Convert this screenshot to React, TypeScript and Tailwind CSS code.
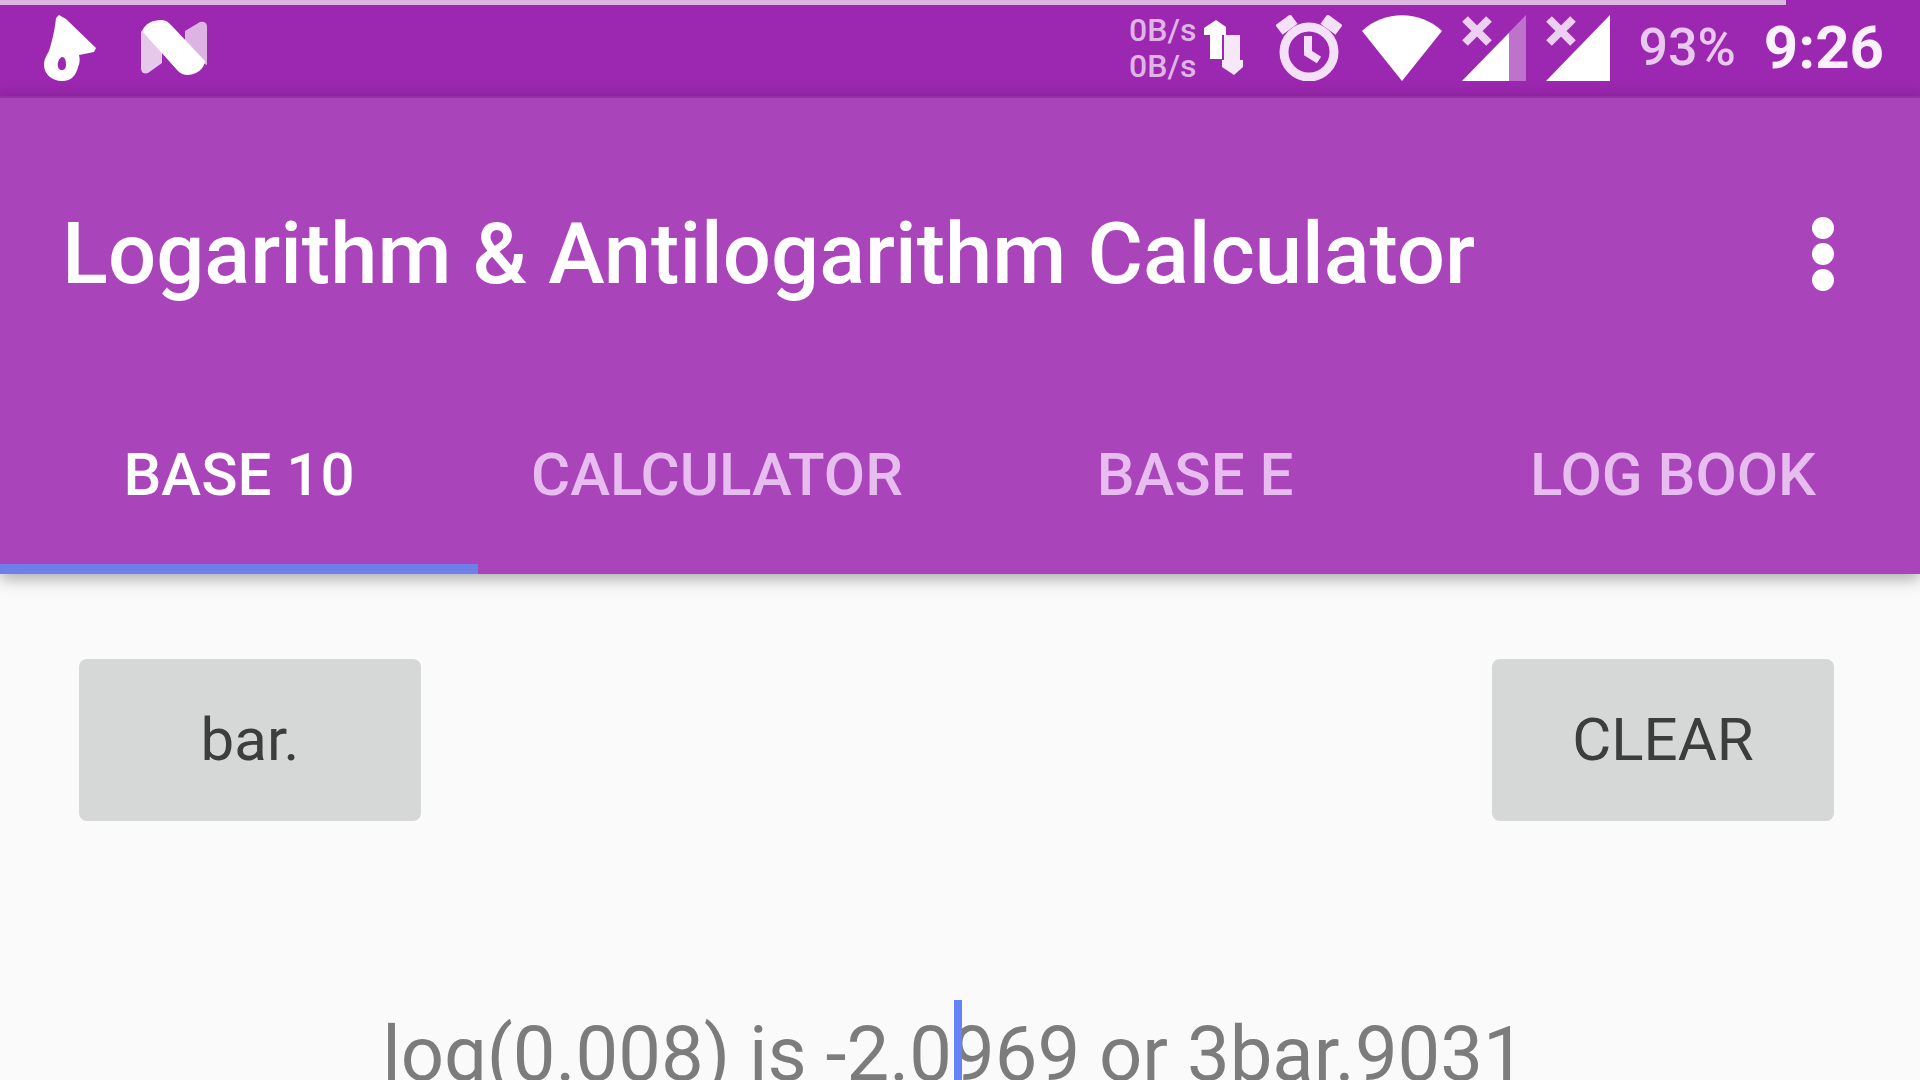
import { useState } from "react";

const TABS = ["BASE 10", "CALCULATOR", "BASE E", "LOG BOOK"] as const;

function PointerIcon() {
  return (
    <svg viewBox="0 0 54 66" className="w-[54px] h-[66px]" fill="#fff">
      <path d="M15 0 L22 4 L52 33 L50 37 L35 40 C36 44 36 48 34 52 C32 60 28 66 18 66 C8 66 0 59 0 50 C0 44 3 40 5 36 C8 27 11 14 12 3 Z M18 42 C15 43 13 48 14 52 C16 57 22 56 22 50 C22 45 21 42 18 42 Z" fillRule="evenodd" />
    </svg>
  );
}

function NougatIcon() {
  return (
    <svg viewBox="0 0 72 58" className="w-[72px] h-[58px]" fill="#fff">
      <path d="M3 12 V49 Q3 56 10 54 L24 44 V20 Z" opacity="0.75" />
      <path d="M69 46 V7 Q68 2 62 3 L47 12 V36 Z" opacity="0.65" />
      <path d="M4 12 Q9 1 24 1 Q29 1 34 7 L67 42 Q66 50 58 54 Q47 59 40 52 Z" />
    </svg>
  );
}

function TransferIcon() {
  return (
    <svg viewBox="0 0 40 56" className="w-10 h-14" fill="#fff">
      <path d="M12 0 L22 7 V15 H18 V39 H6 V15 H0 V8 Z" />
      <path d="M20 15 H36 V40 H39 V47 L30 55 L18 47 V40 H20 Z" opacity="0.9" />
    </svg>
  );
}

function AlarmIcon() {
  return (
    <svg viewBox="0 0 66 66" className="w-[66px] h-[66px]" fill="none" stroke="#f4e0f8">
      <circle cx="33" cy="37" r="25" strokeWidth="9" />
      <path d="M3 15 L18 4 M63 15 L48 4" strokeWidth="12" />
      <path d="M32 21 V38 L43 45" strokeWidth="8" />
    </svg>
  );
}

function WifiIcon() {
  return (
    <svg viewBox="0 0 80 66" className="w-20 h-[66px]" fill="#fff">
      <path d="M0 16 C22 -5 58 -5 80 16 L40 66 Z" />
    </svg>
  );
}

function SignalIcon({ weak = false }: { weak?: boolean }) {
  return (
    <svg viewBox="0 0 64 66" className="w-16 h-[66px]" fill="#fff">
      {weak ? (
        <>
          <path d="M0 66 L64 0 V66 Z" opacity="0.35" />
          <path d="M0 66 L47 18 V66 Z" />
        </>
      ) : (
        <path d="M0 66 L64 0 V66 Z" />
      )}
      <path d="M3 4 L27 28 M27 4 L3 28" stroke="#ecd0f1" strokeWidth="8" />
    </svg>
  );
}

function StatusBar() {
  return (
    <div className="h-24 bg-[#9c27b0] text-white">
      <div className="h-[5px] w-[93%] bg-[#dab6e0]" />
      <div className="flex h-[86px] items-center justify-between pl-11 pr-9">
        <div className="flex items-center gap-10">
          <PointerIcon />
          <NougatIcon />
        </div>
        <div className="flex items-center gap-7">
          <div className="flex items-center gap-5">
            <div className="flex items-center gap-2 mr-3">
              <div className="text-[32px] leading-9 font-medium text-[#dfb5e6]">
                <div>0B/s</div>
                <div>0B/s</div>
              </div>
              <TransferIcon />
            </div>
            <AlarmIcon />
            <WifiIcon />
            <SignalIcon weak />
            <SignalIcon />
          </div>
          <span className="text-[52px] leading-none font-medium text-[#e8c8ee]">93%</span>
          <span className="text-[60px] leading-none font-bold text-[#fbf0fd]">9:26</span>
        </div>
      </div>
    </div>
  );
}

export default function App() {
  const [tab, setTab] = useState(0);
  const [value, setValue] = useState("");

  return (
    <div className="h-screen overflow-hidden bg-[#fafafa] font-['Roboto',sans-serif]">
      <StatusBar />

      <header className="bg-[#aa44bb] border-t-2 border-[#9632a8] shadow-[0_4px_16px_rgba(0,0,0,0.35)]">
        <div className="flex h-[312px] items-center justify-between pl-[62px] pr-[86px]">
          <h1 className="text-[85px] leading-none font-medium text-white whitespace-nowrap">Logarithm &amp; Antilogarithm Calculator</h1>
          <button aria-label="More options" className="flex flex-col gap-1">
            <span className="size-[22px] rounded-full bg-white" />
            <span className="size-[22px] rounded-full bg-white" />
            <span className="size-[22px] rounded-full bg-white" />
          </button>
        </div>
        <nav role="tablist" className="grid grid-cols-4 pr-2">
          {TABS.map((name, i) => (
            <button
              key={name}
              role="tab"
              aria-selected={tab === i}
              onClick={() => setTab(i)}
              className={`h-[164px] pb-6 border-b-10 text-[60px] leading-none font-medium whitespace-nowrap ${
                tab === i ? "border-[#6f7ee8] text-white" : "border-transparent text-[#e6bdee]"
              }`}
            >
              {name}
            </button>
          ))}
        </nav>
      </header>

      <main>
        <div className="flex justify-between pt-[85px] pl-[79px] pr-[86px]">
          <button onClick={() => setValue(value + "bar.")} className="h-[162px] w-[342px] rounded-lg bg-[#d6d8d7] text-[60px] leading-none text-[#3c3d3c]">bar.</button>
          <button onClick={() => setValue("")} className="h-[162px] w-[342px] rounded-lg bg-[#d6d8d7] text-[60px] leading-none text-[#3c3d3c]">CLEAR</button>
        </div>
        <div className="relative mt-[179px] mr-3">
          <input
            aria-label="Number"
            value={value}
            onChange={(e) => setValue(e.target.value)}
            placeholder="log(0.008) is -2.0969 or 3bar.9031"
            className="block h-[108px] w-full bg-transparent text-center text-[76px] text-[#7c7c7c] placeholder:text-[#7c7c7c] outline-none"
          />
          {value === "" && <span className="absolute left-1/2 top-0 h-full w-2 bg-[#6583f7]" />}
        </div>
      </main>
    </div>
  );
}
